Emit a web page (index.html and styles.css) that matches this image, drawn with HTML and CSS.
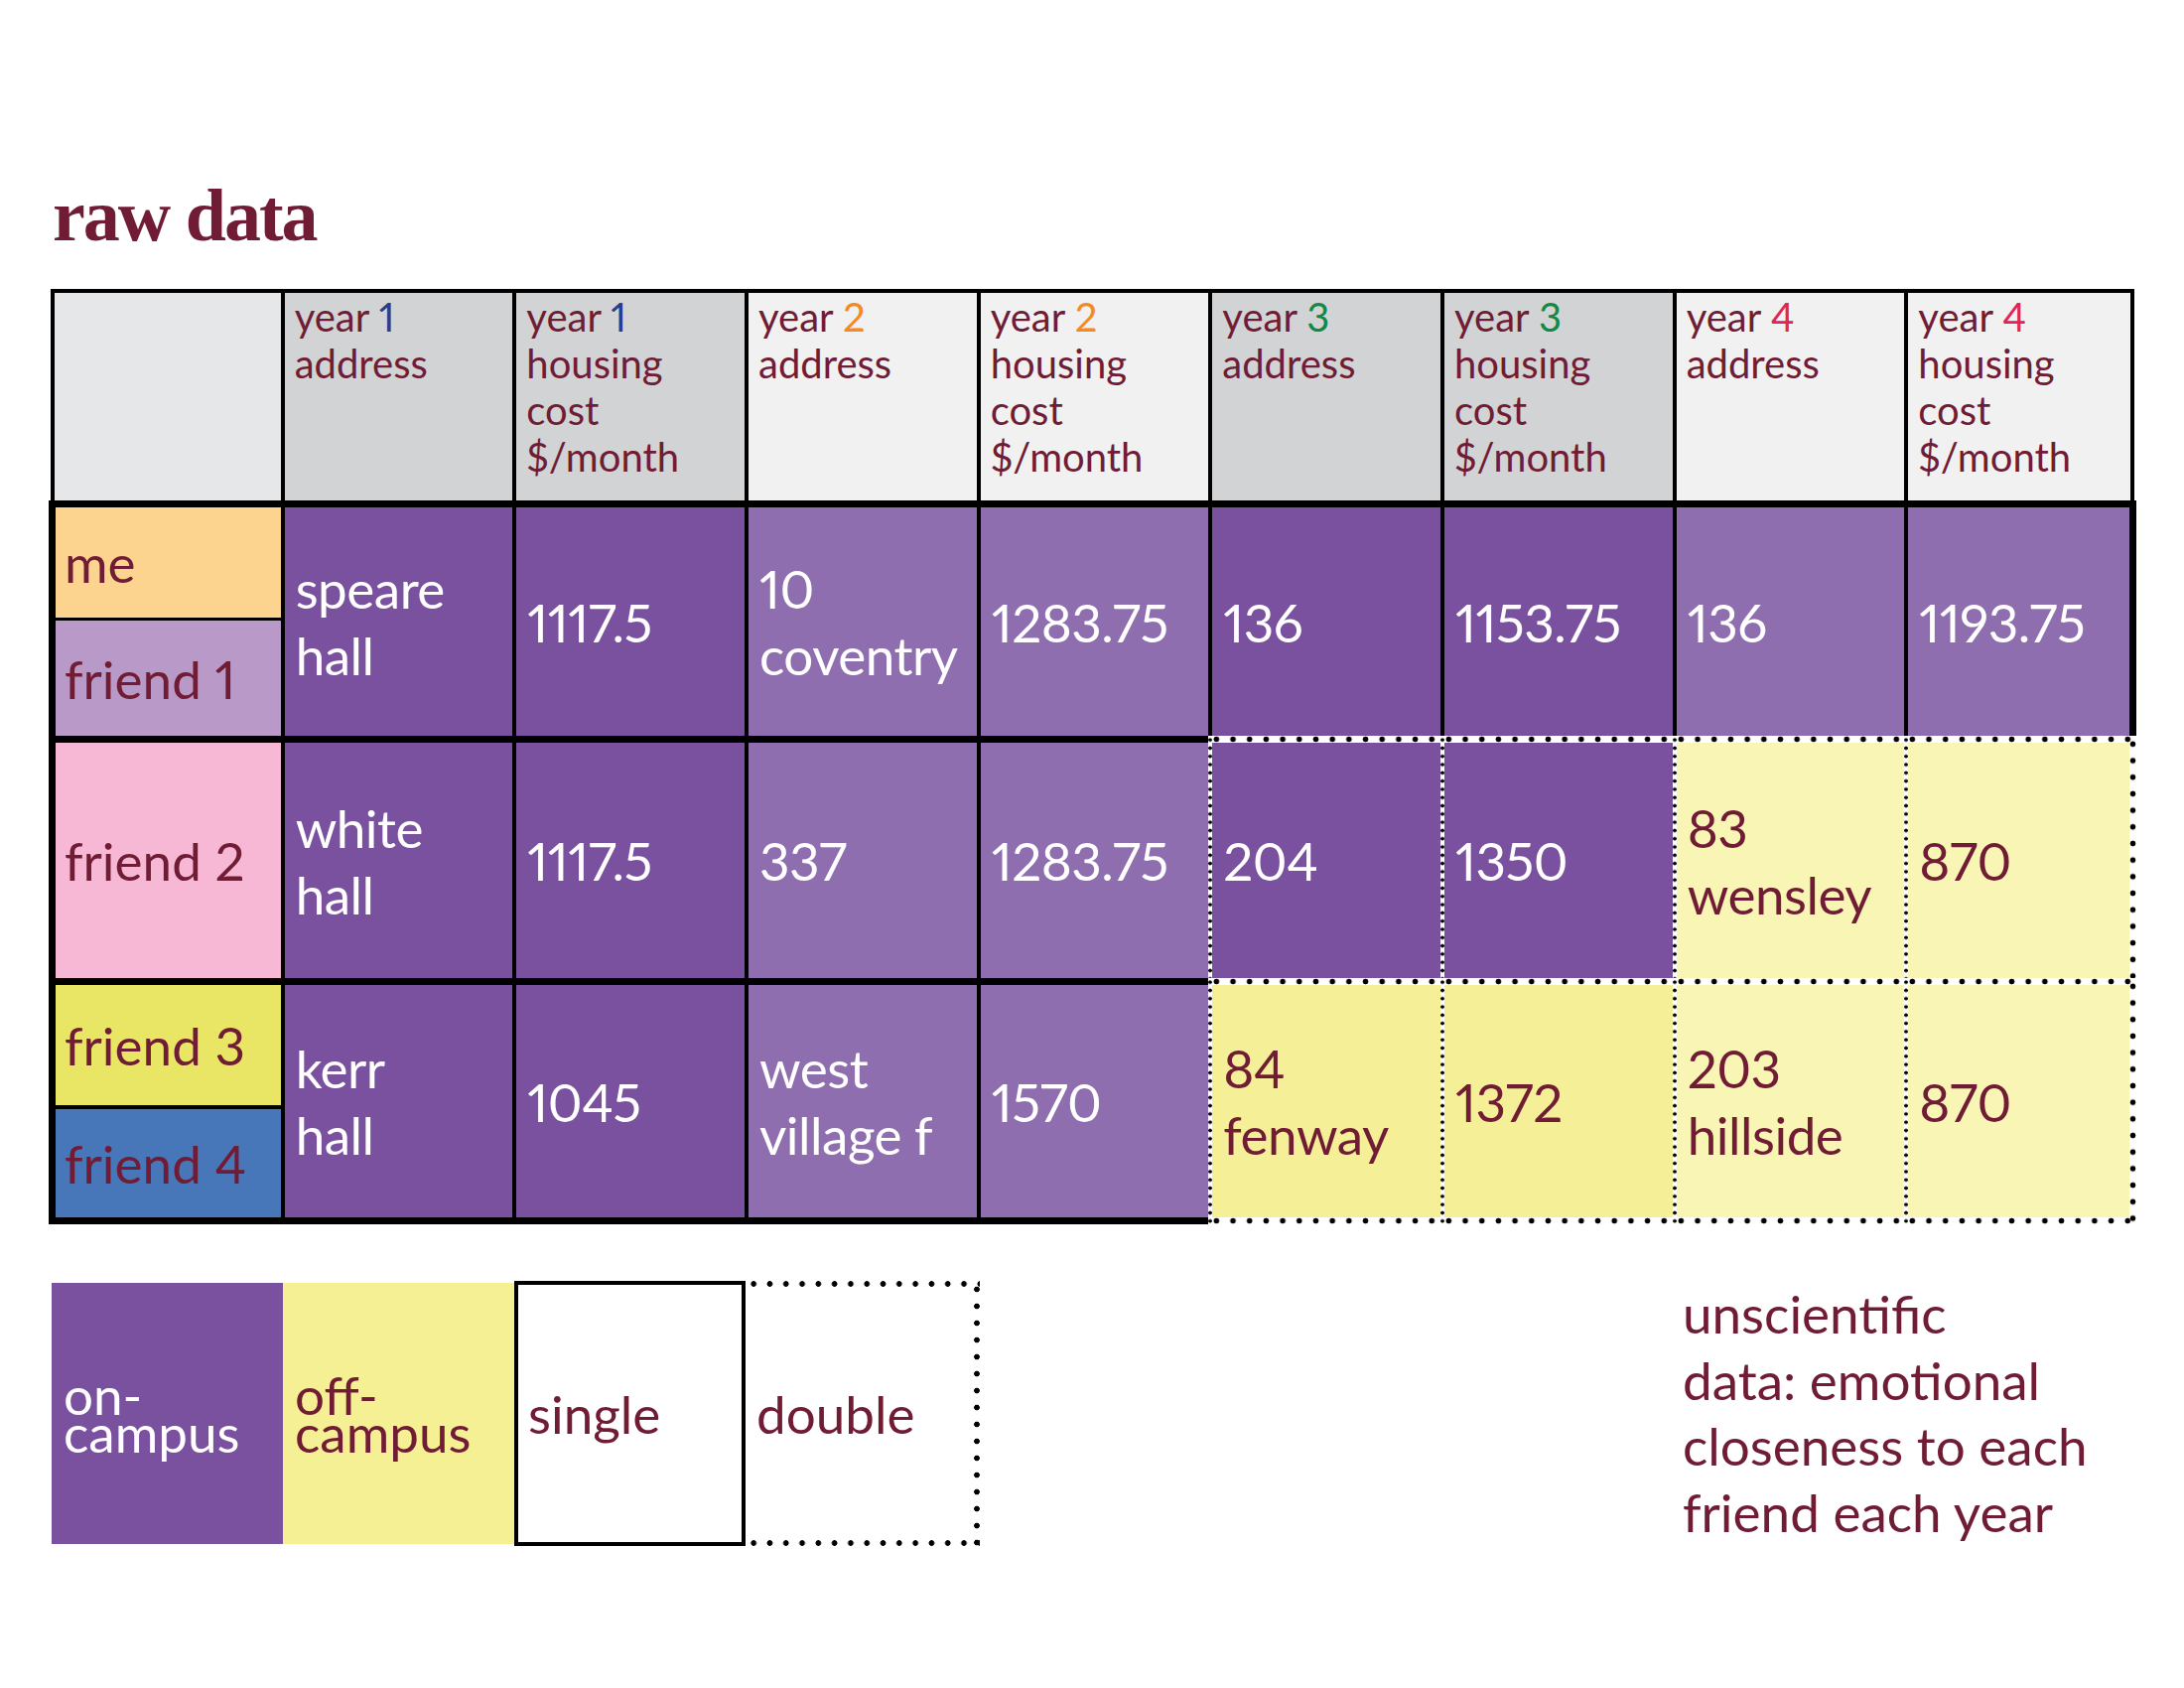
FILE: index.html
```html
<!DOCTYPE html>
<html lang="en">
<head>
<meta charset="utf-8">
<title>raw data</title>
<link rel="stylesheet" href="styles.css">
</head>
<body>
<div class="page">
  <h1 class="title">raw data</h1>

  <div class="sheet">
    <!-- header -->
    <div class="h h0"></div>
    <div class="h hg">year <span class="y1">1</span><br>address</div>
    <div class="h hg">year <span class="y1">1</span><br>housing<br>cost<br>$/month</div>
    <div class="h hl">year <span class="y2">2</span><br>address</div>
    <div class="h hl">year <span class="y2">2</span><br>housing<br>cost<br>$/month</div>
    <div class="h hg">year <span class="y3">3</span><br>address</div>
    <div class="h hg">year <span class="y3">3</span><br>housing<br>cost<br>$/month</div>
    <div class="h hl">year <span class="y4">4</span><br>address</div>
    <div class="h hl hlast">year <span class="y4">4</span><br>housing<br>cost<br>$/month</div>

    <!-- row 1 -->
    <div class="who">
      <div class="p p-me">me</div>
      <div class="p p-f1">friend 1</div>
    </div>
    <div class="d on">speare<br>hall</div>
    <div class="d on">1117.5</div>
    <div class="d on2">10<br>coventry</div>
    <div class="d on2">1283.75</div>
    <div class="d on">136</div>
    <div class="d on">1153.75</div>
    <div class="d on2">136</div>
    <div class="d on2 last">1193.75</div>

    <!-- row 2 -->
    <div class="who">
      <div class="p p-f2">friend 2</div>
    </div>
    <div class="d on">white<br>hall</div>
    <div class="d on">1117.5</div>
    <div class="d on2">337</div>
    <div class="d on2">1283.75</div>
    <div class="d on dA">204</div>
    <div class="d on dA">1350</div>
    <div class="d offp dA">83<br>wensley</div>
    <div class="d offp dB">870</div>

    <!-- row 3 -->
    <div class="who bottom">
      <div class="p p-f3">friend 3</div>
      <div class="p p-f4">friend 4</div>
    </div>
    <div class="d on bottom">kerr<br>hall</div>
    <div class="d on bottom">1045</div>
    <div class="d on2 bottom">west<br>village f</div>
    <div class="d on2 bottom">1570</div>
    <div class="d off dC">84<br>fenway</div>
    <div class="d off dC">1372</div>
    <div class="d offp dC">203<br>hillside</div>
    <div class="d offp dD">870</div>
  </div>

  <div class="legend">
    <div class="lg lg-on">on-<br>campus</div>
    <div class="lg lg-off">off-<br>campus</div>
    <div class="lg lg-single">single</div>
    <div class="lg lg-double">double</div>
    <div class="note">unscientific<br>data: emotional<br>closeness to each<br>friend each year</div>
  </div>
</div>
</body>
</html>
```

FILE: styles.css
```css
:root {
  --maroon: #701c35;
  --dT: radial-gradient(circle, #000 2.5px, rgba(0,0,0,0) 3.2px) 0 0 / 16.7px 7px repeat-x border-box;
  --dB: radial-gradient(circle, #000 2.5px, rgba(0,0,0,0) 3.2px) 0 100% / 16.7px 7px repeat-x border-box;
  --dR: radial-gradient(circle, #000 2.5px, rgba(0,0,0,0) 3.2px) 100% 0 / 7px 16.7px repeat-y border-box;
  --dL: radial-gradient(circle, #000 1.5px, rgba(0,0,0,0) 2.1px) 0 0 / 4px 8.3px repeat-y border-box;
}

* { box-sizing: border-box; }

html, body {
  margin: 0;
  padding: 0;
  background: #fff;
}

body {
  width: 2200px;
  height: 1700px;
  font-family: Lato, "Open Sans", sans-serif;
  font-variant-numeric: proportional-nums;
  color: var(--maroon);
}

.page {
  padding-left: 49px;
}

.title {
  margin: 180px 0 0 4px;
  height: 74px;
  font-family: "Liberation Serif", "Times New Roman", serif;
  font-weight: bold;
  font-size: 74px;
  line-height: 74px;
  letter-spacing: -2px;
  color: var(--maroon);
}

/* ---------- table ---------- */
.sheet {
  margin-top: 37px;
  width: 2103px;
  display: grid;
  grid-template-columns: repeat(9, 1fr);
  grid-template-rows: 213px 237px 244px 248px;
  background: #fff;
}

.h {
  border: 0 solid #000;
  border-width: 4px 0 0 4px;
  padding: 1px 0 0 10px;
  font-size: 40px;
  line-height: 47px;
  color: var(--maroon);
}

.h0 { margin-left: 2px; background: #e6e7e8; }
.hg { background: #d1d3d4; }
.hl { background: #f1f1f1; }
.hlast { border-right-width: 4px; margin-right: 2px; }

.y1 { color: #25408f; }
.y2 { color: #f58a24; }
.y3 { color: #128a47; }
.y4 { color: #e1245b; }

.who {
  border: 0 solid #000;
  border-width: 7px 0 0 7px;
  display: flex;
  flex-direction: column;
  font-size: 53px;
  line-height: 67px;
  color: var(--maroon);
}

.p {
  display: flex;
  align-items: center;
  padding-left: 9px;
  white-space: nowrap;
}

.p-me { height: 111px; background: #fdd48f; }
.p-f1 { flex: 1; background: #b899c8; border-top: 3px solid #000; }
.p-f2 { flex: 1; background: #f6b8d4; }
.p-f3 { height: 121px; background: #e9e666; }
.p-f4 { flex: 1; background: #4776b9; border-top: 4px solid #000; }

.d {
  border: 0 solid #000;
  border-width: 7px 0 0 4px;
  display: flex;
  align-items: center;
  padding-left: 11px;
  font-size: 53px;
  line-height: 67px;
  letter-spacing: -0.5px;
  color: #fff;
  background: var(--bg);
  white-space: nowrap;
}

.on   { --bg: #7a519e; }
.on2  { --bg: #8e6eaf; }
.off  { --bg: #f5f097; color: var(--maroon); }
.offp { --bg: #f8f5b5; color: var(--maroon); }

.last { border-right-width: 7px; }
.bottom { border-bottom-width: 7px; }

/* dotted ("double room") borders */
.dA, .dB, .dC, .dD { border-color: transparent; }

.dA {
  border-width: 7px 0 0 4px;
  background: var(--dT), var(--dL), linear-gradient(var(--bg), var(--bg)) padding-box;
}
.dB {
  border-width: 7px 7px 0 4px;
  background: var(--dT), var(--dL), var(--dR), linear-gradient(var(--bg), var(--bg)) padding-box;
}
.dC {
  border-width: 7px 0 7px 4px;
  background: var(--dT), var(--dL), var(--dB), linear-gradient(var(--bg), var(--bg)) padding-box;
}
.dD {
  border-width: 7px 7px 7px 4px;
  background: var(--dT), var(--dL), var(--dB), var(--dR), linear-gradient(var(--bg), var(--bg)) padding-box;
}

/* ---------- legend ---------- */
.legend {
  margin: 57px 0 0 3px;
  display: grid;
  grid-template-columns: repeat(9, 233px);
  height: 267px;
}

.lg {
  display: flex;
  align-items: center;
  padding-left: 12px;
  font-size: 53px;
  line-height: 38px;
  color: var(--maroon);
}

.lg-on {
  margin: 2px 0;
  background: #7a519e;
  color: #fff;
}

.lg-off {
  margin: 2px 0;
  background: #f5f093;
}

.lg-single {
  border: 4px solid #000;
  padding-left: 10px;
  line-height: 67px;
  background: #fff;
}

.lg-double {
  margin-right: -3px;
  padding-left: 11px;
  line-height: 67px;
  border: 6px solid transparent;
  border-left-width: 0;
  background:
    radial-gradient(circle, #000 2.5px, rgba(0,0,0,0) 3.2px) 0 0 / 16.3px 6px repeat-x border-box,
    radial-gradient(circle, #000 2.5px, rgba(0,0,0,0) 3.2px) 0 100% / 16.3px 6px repeat-x border-box,
    radial-gradient(circle, #000 2.5px, rgba(0,0,0,0) 3.2px) 100% 0 / 6px 17px repeat-y border-box,
    linear-gradient(#fff, #fff) padding-box;
}

.note {
  grid-column: 8 / span 2;
  padding-left: 12px;
  font-size: 53px;
  line-height: 66.5px;
  white-space: nowrap;
  color: var(--maroon);
}
```
